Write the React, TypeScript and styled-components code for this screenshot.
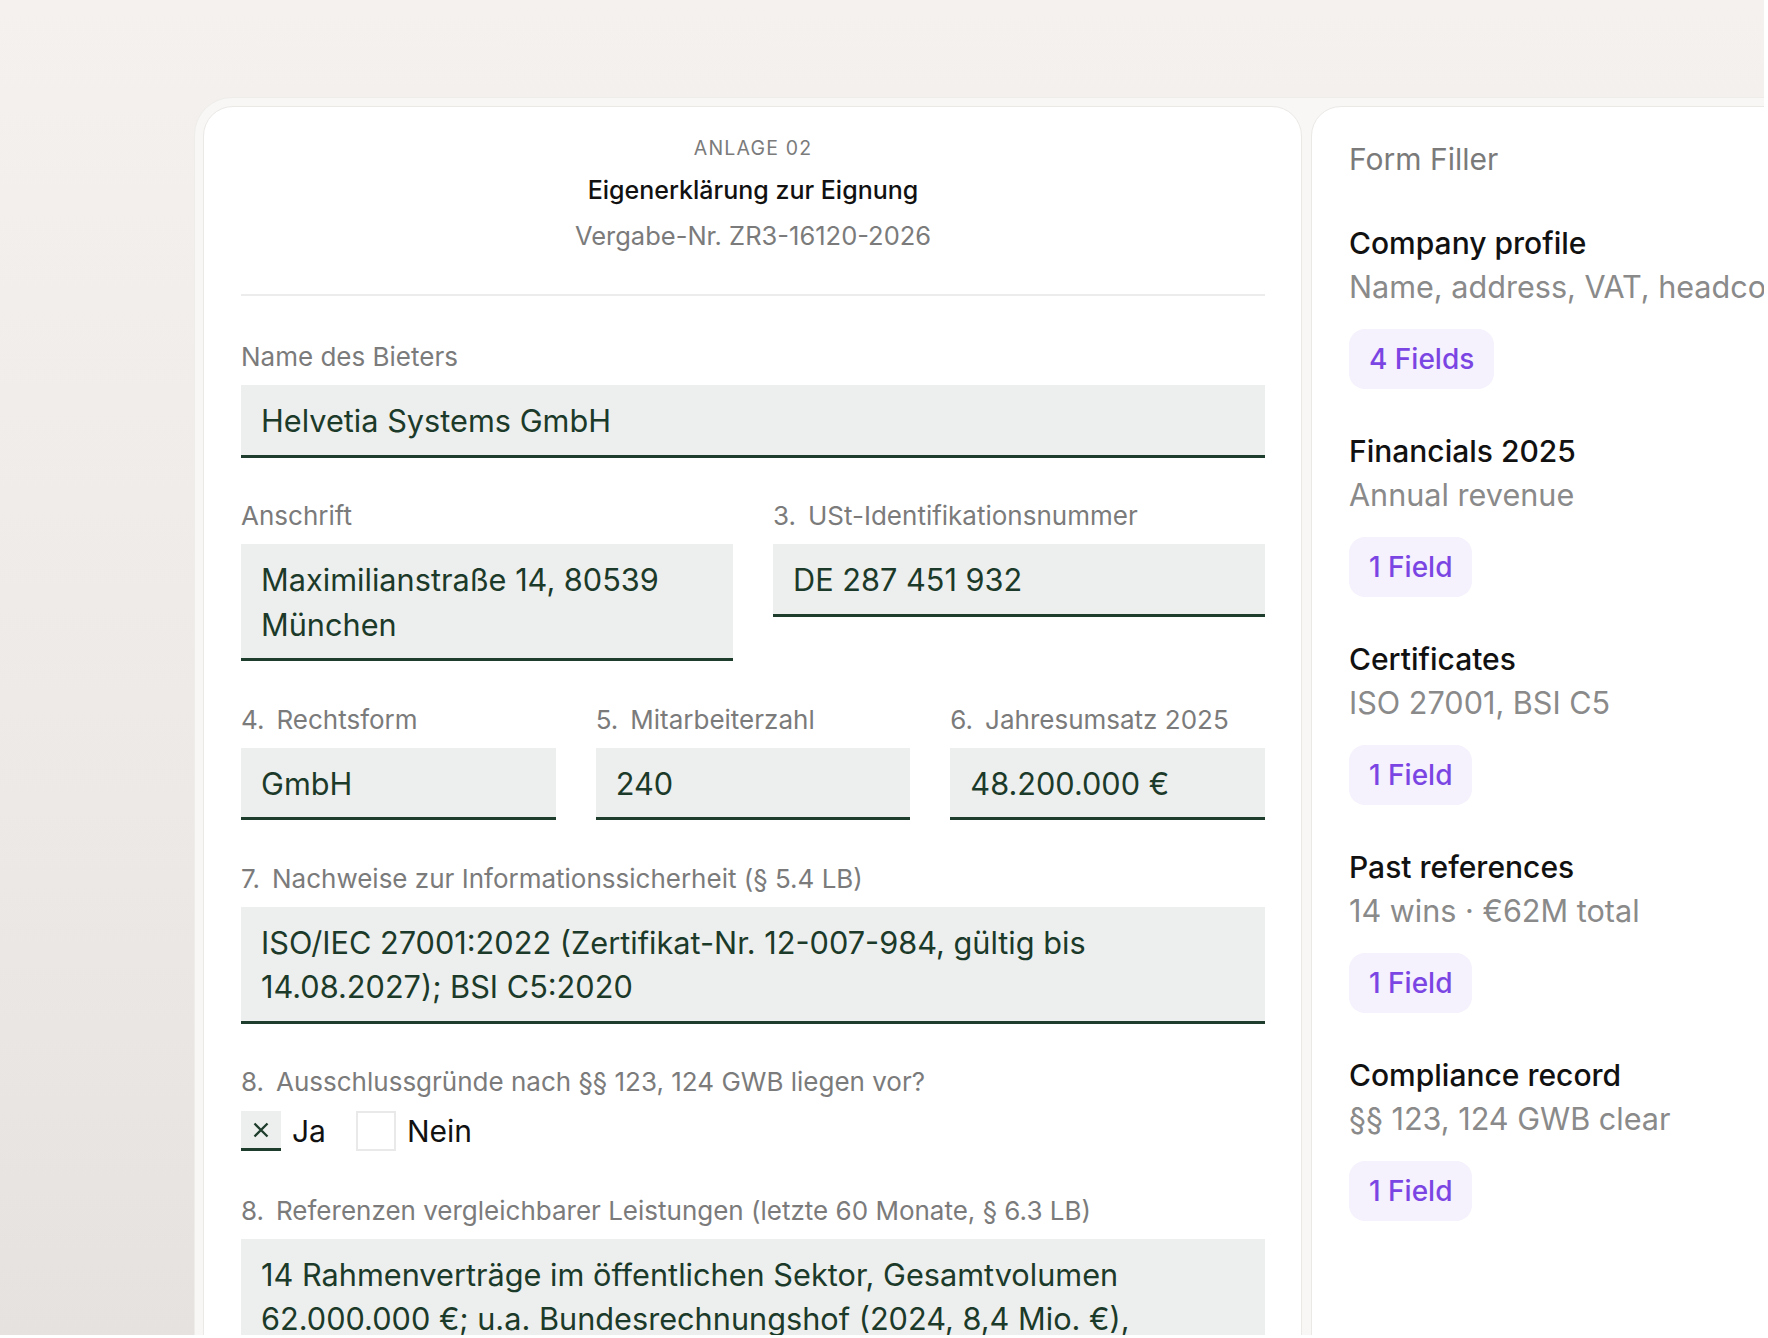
import styled, { createGlobalStyle } from "styled-components";

const GlobalStyle = createGlobalStyle`
  html, body {
    margin: 0;
    padding: 0;
    background: #ffffff;
  }

  body {
    font-family: Inter, "Noto Sans", sans-serif;
    -webkit-font-smoothing: antialiased;
  }
`;

const Viewport = styled.div`
  width: 1764px;
  height: 1335px;
  overflow: hidden;
  box-sizing: border-box;
  padding: 97px 0 0 194px;
  background: linear-gradient(to bottom, #f4f1ee 0%, #ede9e6 60%, #e6e2df 100%);
`;

const Frame = styled.div`
  display: flex;
  align-items: flex-start;
  gap: 9px;
  width: max-content;
  padding: 8px;
  border: 1px solid #efedea;
  border-radius: 38px;
  background: #f8f7f5;
`;

const Card = styled.div`
  box-sizing: border-box;
  height: 1400px;
  background: #ffffff;
  border: 1px solid #ebe9e6;
  border-radius: 30px;
`;

const DocCard = styled(Card)`
  width: 1099px;
  padding: 27px 36px 0 37px;
`;

const FillerCard = styled(Card)`
  width: 500px;
  padding: 31px 37px 0;
`;

/* document header */

const DocHeader = styled.header`
  display: flex;
  flex-direction: column;
  align-items: center;
  padding-bottom: 40px;
  border-bottom: 2px solid #ececec;
`;

const Kicker = styled.div`
  font-size: 19.5px;
  line-height: 28px;
  letter-spacing: 0.06em;
  text-transform: uppercase;
  color: #7b7b7b;
`;

const DocTitle = styled.h1`
  margin: 11px 0 0;
  font-size: 25px;
  line-height: 34px;
  font-weight: 500;
  color: #111111;
`;

const DocRef = styled.div`
  margin-top: 11px;
  font-size: 25.5px;
  line-height: 36px;
  color: #7b7b7b;
`;

/* form fields */

const FieldList = styled.div`
  display: flex;
  flex-direction: column;
  gap: 41.5px;
  padding-top: 44px;
`;

const Row = styled.div<{ $cols: number }>`
  display: grid;
  grid-template-columns: repeat(${(p) => p.$cols}, 1fr);
  column-gap: 40px;
  align-items: start;
`;

const Field = styled.div`
  display: flex;
  flex-direction: column;
  min-width: 0;
`;

const Label = styled.label`
  margin-bottom: 11px;
  font-size: 26px;
  line-height: 34px;
  color: #7b7b7b;
  white-space: nowrap;
`;

const Num = styled.span`
  margin-right: 12px;
`;

const Value = styled.div`
  padding: 14px 20px 11px;
  background: #edefee;
  border-bottom: 3px solid #1f3d2c;
  font-size: 30.7px;
  line-height: 44.5px;
  color: #1c3a29;
`;

const ChoiceRow = styled.div`
  display: flex;
  align-items: center;
  height: 42px;
`;

const Choice = styled.div`
  display: flex;
  align-items: center;
  gap: 11px;
  margin-right: 30px;
`;

const Box = styled.span<{ $checked?: boolean }>`
  box-sizing: border-box;
  display: flex;
  align-items: center;
  justify-content: center;
  width: 40px;
  height: 40px;
  color: #1f3d2c;
  background: ${(p) => (p.$checked ? "#edefee" : "#ffffff")};
  border: ${(p) => (p.$checked ? "none" : "2px solid #e9e9e9")};
  border-bottom: ${(p) => (p.$checked ? "3px solid #1f3d2c" : "2px solid #e9e9e9")};
`;

const ChoiceText = styled.span`
  font-size: 30px;
  line-height: 42px;
  color: #111111;
`;

/* form filler side panel */

const FillerTitle = styled.h2`
  margin: 0 0 41px;
  font-size: 30px;
  line-height: 43px;
  font-weight: 400;
  color: #7a7a7a;
`;

const SectionList = styled.div`
  display: flex;
  flex-direction: column;
  gap: 41px;
`;

const Section = styled.section`
  display: flex;
  flex-direction: column;
  align-items: flex-start;
`;

const SectionTitle = styled.div`
  font-size: 30px;
  line-height: 43px;
  font-weight: 500;
  color: #111111;
  white-space: nowrap;
`;

const SectionDesc = styled.div`
  font-size: 30.6px;
  line-height: 43px;
  color: #8a8a8a;
  white-space: nowrap;
`;

const Badge = styled.span`
  margin-top: 21px;
  padding: 10px 20px;
  border-radius: 16px;
  background: #f5f1fd;
  font-size: 28px;
  line-height: 40px;
  font-weight: 500;
  color: #7b45e3;
`;

function Cross() {
  return (
    <svg width="20" height="20" viewBox="0 0 20 20" fill="none">
      <path d="M3.5 3.5L16.5 16.5M16.5 3.5L3.5 16.5" stroke="currentColor" strokeWidth="2.3" />
    </svg>
  );
}

function NumLabel({ n, children }: { n?: string; children: string }) {
  return (
    <Label>
      {n && <Num>{n}</Num>}
      {children}
    </Label>
  );
}

const sources = [
  { title: "Company profile", desc: "Name, address, VAT, headcount", count: "4 Fields" },
  { title: "Financials 2025", desc: "Annual revenue", count: "1 Field" },
  { title: "Certificates", desc: "ISO 27001, BSI C5", count: "1 Field" },
  { title: "Past references", desc: "14 wins · €62M total", count: "1 Field" },
  { title: "Compliance record", desc: "§§ 123, 124 GWB clear", count: "1 Field" },
];

export default function App() {
  return (
    <>
      <GlobalStyle />
      <Viewport>
        <Frame>
          <DocCard>
            <DocHeader>
              <Kicker>Anlage 02</Kicker>
              <DocTitle>Eigenerklärung zur Eignung</DocTitle>
              <DocRef>Vergabe-Nr. ZR3-16120-2026</DocRef>
            </DocHeader>

            <FieldList>
              <Field>
                <NumLabel>Name des Bieters</NumLabel>
                <Value>Helvetia Systems GmbH</Value>
              </Field>

              <Row $cols={2}>
                <Field>
                  <NumLabel>Anschrift</NumLabel>
                  <Value>Maximilianstraße 14, 80539 München</Value>
                </Field>
                <Field>
                  <NumLabel n="3.">USt-Identifikationsnummer</NumLabel>
                  <Value>DE 287 451 932</Value>
                </Field>
              </Row>

              <Row $cols={3}>
                <Field>
                  <NumLabel n="4.">Rechtsform</NumLabel>
                  <Value>GmbH</Value>
                </Field>
                <Field>
                  <NumLabel n="5.">Mitarbeiterzahl</NumLabel>
                  <Value>240</Value>
                </Field>
                <Field>
                  <NumLabel n="6.">Jahresumsatz 2025</NumLabel>
                  <Value>48.200.000 €</Value>
                </Field>
              </Row>

              <Field>
                <NumLabel n="7.">Nachweise zur Informationssicherheit (§ 5.4 LB)</NumLabel>
                <Value>ISO/IEC 27001:2022 (Zertifikat-Nr. 12-007-984, gültig bis 14.08.2027); BSI C5:2020</Value>
              </Field>

              <Field>
                <NumLabel n="8.">Ausschlussgründe nach §§ 123, 124 GWB liegen vor?</NumLabel>
                <ChoiceRow>
                  <Choice>
                    <Box $checked>
                      <Cross />
                    </Box>
                    <ChoiceText>Ja</ChoiceText>
                  </Choice>
                  <Choice>
                    <Box />
                    <ChoiceText>Nein</ChoiceText>
                  </Choice>
                </ChoiceRow>
              </Field>

              <Field>
                <NumLabel n="8.">Referenzen vergleichbarer Leistungen (letzte 60 Monate, § 6.3 LB)</NumLabel>
                <Value>
                  14 Rahmenverträge im öffentlichen Sektor, Gesamtvolumen 62.000.000 €; u.a. Bundesrechnungshof
                  (2024, 8,4 Mio. €), Landeshauptstadt München (2023, 6,1 Mio. €)
                </Value>
              </Field>
            </FieldList>
          </DocCard>

          <FillerCard>
            <FillerTitle>Form Filler</FillerTitle>
            <SectionList>
              {sources.map((s) => (
                <Section key={s.title}>
                  <SectionTitle>{s.title}</SectionTitle>
                  <SectionDesc>{s.desc}</SectionDesc>
                  <Badge>{s.count}</Badge>
                </Section>
              ))}
            </SectionList>
          </FillerCard>
        </Frame>
      </Viewport>
    </>
  );
}
